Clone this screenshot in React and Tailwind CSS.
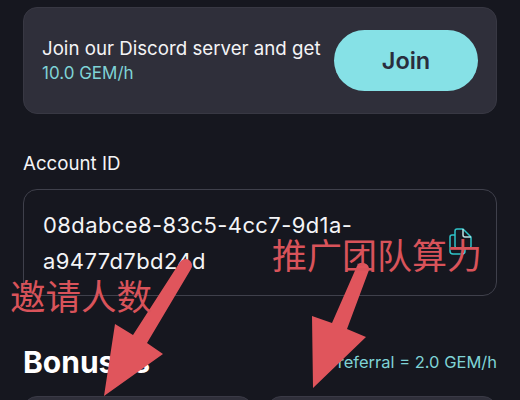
import React from "react";

const App = () => {
  return (
    <div className="relative h-[400px] w-[520px] overflow-hidden bg-[#16171f] font-['Inter',sans-serif] text-white">
      <div className="px-[23px] pt-[7px]">
        {/* Discord card */}
        <div className="flex h-[107px] items-center justify-between rounded-[14px] border border-[#383843] bg-[#2f2f3a] pl-[18px] pr-[18px]">
          <div>
            <p className="whitespace-nowrap text-[18.7px] leading-[24px] text-[#f4f4f6]">Join our Discord server and get</p>
            <p className="text-[17px] leading-[24px] text-[#7fd3d6]">10.0 GEM/h</p>
          </div>
          <button className="h-[61px] w-[144px] rounded-full bg-[#86e1e6] text-[23.5px] font-semibold text-[#2a2d3d]">
            Join
          </button>
        </div>

        {/* Account ID */}
        <p className="mt-[38px] text-[18.7px] leading-[24px] text-[#f4f4f6]">Account ID</p>
        <div className="mt-[13px] flex h-[107px] items-center justify-between rounded-[14px] border border-[#3f404b] pl-[19px] pr-[24px]">
          <p className="w-[340px] text-[22px] leading-[36px] tracking-[0.4px] text-[#f4f4f6]">
            08dabce8-83c5-4cc7-9d1a-
            <br />
            a9477d7bd24d
          </p>
          <svg className="mb-[2px]" width="23" height="27" viewBox="0 0 23 27" fill="none" strokeWidth="1.5" strokeLinejoin="round">
            <path d="M6 7H3a2 2 0 0 0-2 2v14a3 3 0 0 0 3 3h9a3 3 0 0 0 3-3v-3" stroke="#2fc4c9" />
            <path d="M6 3a2 2 0 0 1 2-2h6l8 8v9a2 2 0 0 1-2 2H8a2 2 0 0 1-2-2z" stroke="#2fc4c9" />
            <path d="M14 1v6a2 2 0 0 0 2 2h6" stroke="#b8e3e6" />
          </svg>
        </div>

        {/* Bonus header */}
        <div className="mt-[46px] flex items-center justify-between">
          <h2 className="text-[30px] font-bold leading-[40px] text-white">Bonuses</h2>
          <p className="text-[16.5px] text-[#7fd3d6]">1 referral = 2.0 GEM/h</p>
        </div>

        {/* Stat cards, only their top edge is in view */}
        <div className="mt-[14px] grid grid-cols-2 gap-[14px]">
          <div className="h-[100px] rounded-[14px] border border-[#3a3a46] bg-[#2f2f3a]" />
          <div className="h-[100px] rounded-[14px] border border-[#3a3a46] bg-[#2f2f3a]" />
        </div>
      </div>

      {/* Red annotations on top of the screenshot */}
      <svg className="absolute left-0 top-0" width="520" height="400" viewBox="0 0 520 400" fill="#e0555c">
        <path d="M180 262a6.5 6.5 0 0 1 11 7l-44 74 16 11-59 42 11-72 18 11z" />
        <path d="M357 266a6.5 6.5 0 0 1 12 4l-22 59 19 8-53 51-1-72 20 7z" />
      </svg>
      <span className="absolute left-[10px] top-[273px] font-['Noto_Sans_CJK_SC',sans-serif] text-[35.5px] font-normal leading-[44px] text-[#d9535a]">
        邀请人数
      </span>
      <span className="absolute left-[272px] top-[232px] font-['Noto_Sans_CJK_SC',sans-serif] text-[35px] font-normal leading-[44px] text-[#d9535a]">
        推广团队算力
      </span>
    </div>
  );
};

export default App;
